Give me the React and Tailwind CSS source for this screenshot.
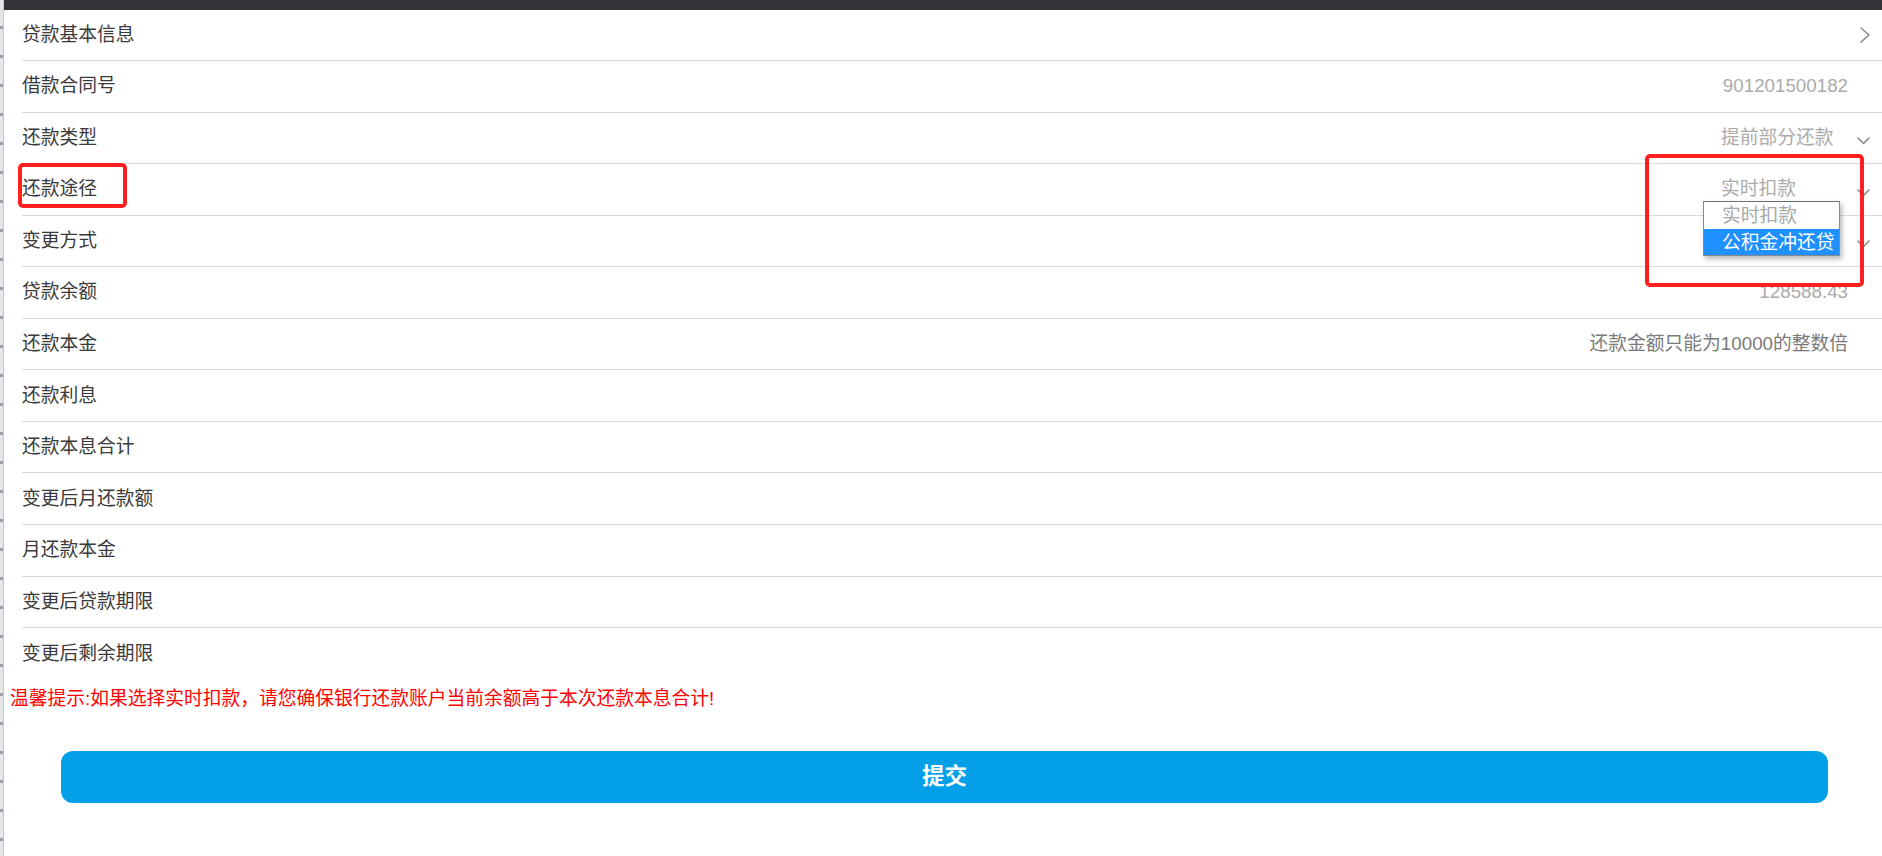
import React from 'react'

const rows = [
  { label: '贷款基本信息', type: 'link' },
  { label: '借款合同号', value: '901201500182' },
  { label: '还款类型', value: '提前部分还款', type: 'select' },
  { label: '还款途径', value: '实时扣款', type: 'select', open: true },
  { label: '变更方式', value: '', type: 'select' },
  { label: '贷款余额', value: '128588.43' },
  { label: '还款本金', value: '还款金额只能为10000的整数倍', hint: true },
  { label: '还款利息' },
  { label: '还款本息合计' },
  { label: '变更后月还款额' },
  { label: '月还款本金' },
  { label: '变更后贷款期限' },
  { label: '变更后剩余期限', last: true },
]

function ChevronDown() {
  return (
    <svg width="16" height="10" viewBox="0 0 16 10" className="mt-[7px]" fill="none" stroke="#8a8a8a" strokeWidth="1.6" strokeLinecap="round" strokeLinejoin="round">
      <path d="M1 2 L6.5 7.5 L12 2" />
    </svg>
  )
}

function ChevronRight() {
  return (
    <svg width="16" height="16" viewBox="0 0 16 16" fill="none" stroke="#8a8a8a" strokeWidth="1.6" strokeLinecap="round" strokeLinejoin="round">
      <path d="M4 1 L12 8 L4 15" />
    </svg>
  )
}

function Popup() {
  return (
    <div className="absolute left-[-18px] top-full w-[137px] z-10 bg-white border border-[#8a8a8a] border-t-[#6e6e6e] shadow-[2px_3px_5px_rgba(0,0,0,0.28)] text-[18.75px] leading-[27px] whitespace-nowrap overflow-hidden">
      <div className="h-[27px] pl-[18px] text-[#a8a8a8]">实时扣款</div>
      <div className="h-[26px] pl-[18px] bg-[#1e90ff] text-white">公积金冲还贷</div>
    </div>
  )
}

function Row({ row }) {
  return (
    <div className={`h-[51.55px] flex items-center justify-between pr-[9px] ${row.last ? '' : 'border-b border-[#dadada]'}`}>
      <span className="text-[#3a3a3a]">{row.label}</span>
      <div className="flex items-center gap-[9px]">
        {row.type === 'select' ? (
          <div className="relative w-[127px] h-[24px] leading-[24px] text-[#ababab] whitespace-nowrap">
            {row.value}
            {row.open && <Popup />}
          </div>
        ) : (
          row.value && (
            <span className={row.hint ? 'text-[#7a7a7a]' : 'text-[#ababab]'}>{row.value}</span>
          )
        )}
        <div className="w-[16px] flex justify-center">
          {row.type === 'select' && <ChevronDown />}
          {row.type === 'link' && <ChevronRight />}
        </div>
      </div>
    </div>
  )
}

export default function App() {
  return (
    <div className="relative w-[1882px] h-[856px] overflow-hidden bg-white flex font-['Liberation_Sans','Noto_Sans_CJK_SC',sans-serif] text-[18.75px]">
      <div className="w-[4px] shrink-0 border-r border-[#c3c6cb] bg-[repeating-linear-gradient(to_bottom,#e4e6e9_0px,#e4e6e9_26px,#9aa0a7_26px,#9aa0a7_29px)]" />
      <div className="flex-1 flex flex-col">
        <div className="h-[9.5px] bg-[#333337]" />
        <div className="pl-[18px]">
          {rows.map((row) => (
            <Row key={row.label} row={row} />
          ))}
        </div>
        <p className="mt-[7px] pl-[6px] leading-[24px] text-[#ff0000]">
          温馨提示:如果选择实时扣款，请您确保银行还款账户当前余额高于本次还款本息合计!
        </p>
        <button className="mt-[40px] ml-[57px] mr-[54px] h-[52px] rounded-[12px] bg-[#03a0e8] text-white font-bold text-[22.5px]">
          提交
        </button>
      </div>

      <div className="absolute left-[18px] top-[163px] w-[109px] h-[45px] border-[4px] border-[#ff1f1f] rounded-[5px] pointer-events-none" />
      <div className="absolute left-[1645px] top-[154px] w-[219px] h-[133px] border-[4px] border-[#ff1f1f] rounded-[5px] pointer-events-none z-20" />
    </div>
  )
}
